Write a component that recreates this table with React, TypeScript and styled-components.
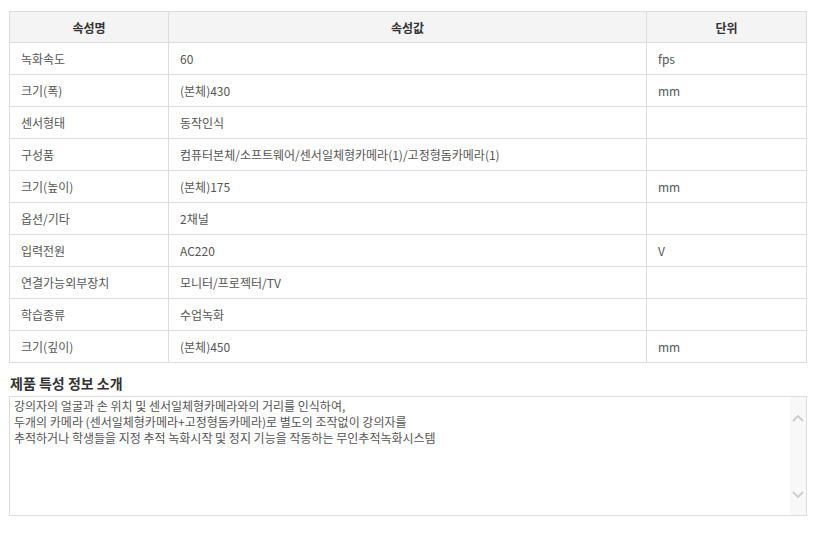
import styled, { createGlobalStyle } from "styled-components";

const GlobalStyle = createGlobalStyle`
  body {
    margin: 0;
    background: #ffffff;
    font-family: "Noto Sans CJK KR", "Noto Sans", sans-serif;
  }
`;

const rows = [
  { name: "녹화속도", value: "60", unit: "fps" },
  { name: "크기(폭)", value: "(본체)430", unit: "mm" },
  { name: "센서형태", value: "동작인식", unit: "" },
  { name: "구성품", value: "컴퓨터본체/소프트웨어/센서일체형카메라(1)/고정형돔카메라(1)", unit: "" },
  { name: "크기(높이)", value: "(본체)175", unit: "mm" },
  { name: "옵션/기타", value: "2채널", unit: "" },
  { name: "입력전원", value: "AC220", unit: "V" },
  { name: "연결가능외부장치", value: "모니터/프로젝터/TV", unit: "" },
  { name: "학습종류", value: "수업녹화", unit: "" },
  { name: "크기(깊이)", value: "(본체)450", unit: "mm" },
];

const description = [
  "강의자의 얼굴과 손 위치 및 센서일체형카메라와의 거리를 인식하여,",
  "두개의 카메라 (센서일체형카메라+고정형돔카메라)로 별도의 조작없이 강의자를",
  "추적하거나 학생들을 지정 추적 녹화시작 및 정지 기능을 작동하는 무인추적녹화시스템",
];

const Page = styled.div`
  padding: 11px 9px 0 9px;
  width: 798px;
`;

const SpecTable = styled.table`
  width: 798px;
  border-collapse: collapse;
  table-layout: fixed;
  border: 1px solid #dcdcdc;
`;

const HeadCell = styled.th`
  height: 30px;
  padding: 0;
  background: #f4f4f4;
  border: 1px solid #dcdcdc;
  color: #333333;
  font-size: 12px;
  font-weight: bold;
  text-align: center;
`;

const Cell = styled.td`
  height: 30px;
  padding: 0 0 1px 11px;
  border: 1px solid #dcdcdc;
  color: #555555;
  font-size: 12px;
  text-align: left;
  white-space: nowrap;
`;

const SectionTitle = styled.h3`
  margin: 10px 0 3px 1px;
  font-size: 14px;
  font-weight: bold;
  color: #333333;
  line-height: 20px;
`;

const DescBox = styled.div`
  display: flex;
  height: 118px;
  border: 1px solid #dcdcdc;
`;

const DescText = styled.div`
  flex: 1;
  padding: 1px 4px;
  font-size: 12px;
  line-height: 16px;
  color: #555555;
`;

const ScrollTrack = styled.div`
  width: 16px;
  background: #f8f8f8;
  display: flex;
  flex-direction: column;
  justify-content: space-between;
  align-items: center;
  padding: 17px 0 16px 0;
`;

function Chevron({ up }: { up?: boolean }) {
  return (
    <svg width="12" height="8" viewBox="0 0 12 8">
      <path
        d={up ? "M1 7 L6 2 L11 7" : "M1 1 L6 6 L11 1"}
        fill="none"
        stroke="#cccccc"
        strokeWidth="1.8"
      />
    </svg>
  );
}

export default function App() {
  return (
    <Page>
      <GlobalStyle />
      <SpecTable>
        <colgroup>
          <col style={{ width: "159px" }} />
          <col style={{ width: "478px" }} />
          <col style={{ width: "160px" }} />
        </colgroup>
        <thead>
          <tr>
            <HeadCell>속성명</HeadCell>
            <HeadCell>속성값</HeadCell>
            <HeadCell>단위</HeadCell>
          </tr>
        </thead>
        <tbody>
          {rows.map((r) => (
            <tr key={r.name}>
              <Cell>{r.name}</Cell>
              <Cell>{r.value}</Cell>
              <Cell>{r.unit}</Cell>
            </tr>
          ))}
        </tbody>
      </SpecTable>
      <SectionTitle>제품 특성 정보 소개</SectionTitle>
      <DescBox>
        <DescText>
          {description.map((line) => (
            <div key={line}>{line}</div>
          ))}
        </DescText>
        <ScrollTrack>
          <Chevron up />
          <Chevron />
        </ScrollTrack>
      </DescBox>
    </Page>
  );
}
